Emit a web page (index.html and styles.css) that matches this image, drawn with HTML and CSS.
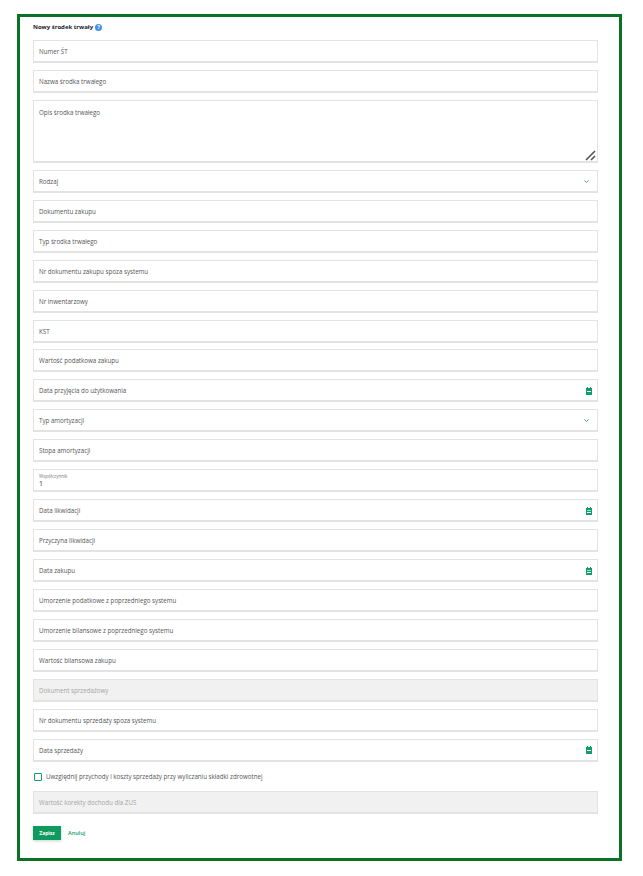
FILE: index.html
```html
<!DOCTYPE html>
<html lang="pl">
<head>
  <meta charset="UTF-8" />
  <title>Nowy środek trwały</title>
  <link rel="stylesheet" href="styles.css">
</head>
<body>
  <div class="frame">
    <div class="heading">
      <span class="heading-text">Nowy środek trwały</span>
      <span class="info">?</span>
    </div>

    <form class="fields">
      <div class="field">Numer ŚT</div>
      <div class="field">Nazwa środka trwałego</div>
      <div class="field area">
        Opis środka trwałego
        <svg class="resize" width="11" height="11" viewBox="0 0 11 11">
          <path d="M1 10 10 1M6 10 10 6" stroke="#555" stroke-width="1.6" fill="none"/>
        </svg>
      </div>
      <div class="field">
        Rodzaj
        <svg class="chevron" width="5" height="3" viewBox="0 0 5 3"><path d="M.4.5 2.5 2.4 4.6.5" stroke="#2aa87c" stroke-width=".9" fill="none"/></svg>
      </div>
      <div class="field">Dokumentu zakupu</div>
      <div class="field">Typ środka trwałego</div>
      <div class="field">Nr dokumentu zakupu spoza systemu</div>
      <div class="field">Nr inwentarzowy</div>
      <div class="field">KST</div>
      <div class="field">Wartość podatkowa zakupu</div>
      <div class="field">
        Data przyjęcia do użytkowania
        <svg class="calendar" width="6" height="8" viewBox="0 0 6 8"><path d="M1 0h1v1h2V0h1v1h1v7H0V1h1z" fill="#0f9d68"/><path d="M1 4h4v1H1z" fill="#fff"/></svg>
      </div>
      <div class="field">
        Typ amortyzacji
        <svg class="chevron" width="5" height="3" viewBox="0 0 5 3"><path d="M.4.5 2.5 2.4 4.6.5" stroke="#2aa87c" stroke-width=".9" fill="none"/></svg>
      </div>
      <div class="field">Stopa amortyzacji</div>
      <div class="field filled">
        <span class="float-label">Współczynnik</span>
        <span class="value">1</span>
      </div>
      <div class="field">
        Data likwidacji
        <svg class="calendar" width="6" height="8" viewBox="0 0 6 8"><path d="M1 0h1v1h2V0h1v1h1v7H0V1h1z" fill="#0f9d68"/><path d="M1 3h4v1H1z" fill="#9fdcc4"/><path d="M1 5h4v1H1z" fill="#fff"/></svg>
      </div>
      <div class="field">Przyczyna likwidacji</div>
      <div class="field">
        Data zakupu
        <svg class="calendar" width="6" height="8" viewBox="0 0 6 8"><path d="M1 0h1v1h2V0h1v1h1v7H0V1h1z" fill="#0f9d68"/><path d="M1 3h4v1H1z" fill="#9fdcc4"/><path d="M1 5h4v1H1z" fill="#fff"/></svg>
      </div>
      <div class="field">Umorzenie podatkowe z poprzedniego systemu</div>
      <div class="field">Umorzenie bilansowe z poprzedniego systemu</div>
      <div class="field">Wartość bilansowa zakupu</div>
      <div class="field disabled">Dokument sprzedażowy</div>
      <div class="field">Nr dokumentu sprzedaży spoza systemu</div>
      <div class="field">
        Data sprzedaży
        <svg class="calendar" width="6" height="8" viewBox="0 0 6 8"><path d="M1 0h1v1h2V0h1v1h1v7H0V1h1z" fill="#0f9d68"/><path d="M1 4h4v1H1z" fill="#fff"/></svg>
      </div>
      <label class="check">
        <span class="box"></span>
        Uwzględnij przychody i koszty sprzedaży przy wyliczaniu składki zdrowotnej
      </label>
      <div class="field disabled">Wartość korekty dochodu dla ZUS</div>
    </form>

    <div class="actions">
      <button class="btn-save" type="button">Zapisz</button>
      <a class="cancel" href="#">Anuluj</a>
    </div>
  </div>
</body>
</html>
```

FILE: styles.css
```css
* {
  box-sizing: border-box;
}

body {
  margin: 0;
  background-color: #fff;
  font-family: "Open Sans", sans-serif;
  font-size: 6.2px;
  color: #555;
}

.frame {
  width: 605px;
  height: 847px;
  margin: 14px 0 0 17px;
  padding: 3px 21px 0 13px;
  border: 3px solid #0b7125;
}

.heading {
  display: flex;
  align-items: center;
  gap: 2px;
  height: 14px;
  margin-bottom: 6px;
  font-size: 6px;
  font-weight: 700;
  color: #1b2530;
}

.info {
  display: flex;
  align-items: center;
  justify-content: center;
  width: 7px;
  height: 7px;
  border-radius: 50%;
  background-color: #3d95e8;
  font-size: 5px;
  color: #fff;
}

.fields {
  display: flex;
  flex-direction: column;
  gap: 6.94px;
}

.field {
  position: relative;
  display: flex;
  align-items: center;
  height: 23px;
  padding: 1px 5px 0;
  border: 1px solid #e3e3e3;
  border-bottom-width: 2px;
  background-color: #fff;
}

.area {
  align-items: flex-start;
  height: 63px;
  padding-top: 7px;
}

.resize {
  position: absolute;
  right: 1px;
  bottom: 0;
}

.chevron,
.calendar {
  margin-left: auto;
}

.chevron {
  margin-right: 3px;
}

.filled {
  flex-direction: column;
  align-items: flex-start;
  justify-content: center;
  padding-top: 0;
}

.float-label {
  font-size: 4.5px;
  color: #777;
}

.value {
  font-size: 7px;
  color: #333;
}

.disabled {
  background-color: #f1f1f1;
  color: #a5a5a5;
}

.check {
  display: flex;
  align-items: center;
  gap: 4px;
  height: 16px;
  margin-bottom: -1px;
}

.box {
  width: 8px;
  height: 8px;
  margin-left: 1px;
  border: 1px solid #0f9d68;
  border-radius: 1px;
}

.actions {
  display: flex;
  align-items: center;
  gap: 7px;
  margin-top: 12px;
}

.btn-save {
  width: 28px;
  height: 14px;
  padding: 0;
  border: 0;
  background-color: #0f9a5f;
  box-shadow: 0 1px 3px rgba(0, 0, 0, 0.2);
  font-family: inherit;
  font-size: 5px;
  font-weight: 700;
  color: #fff;
}

.cancel {
  font-size: 5.5px;
  font-weight: 600;
  color: #0f9a5f;
  text-decoration: none;
}
```
